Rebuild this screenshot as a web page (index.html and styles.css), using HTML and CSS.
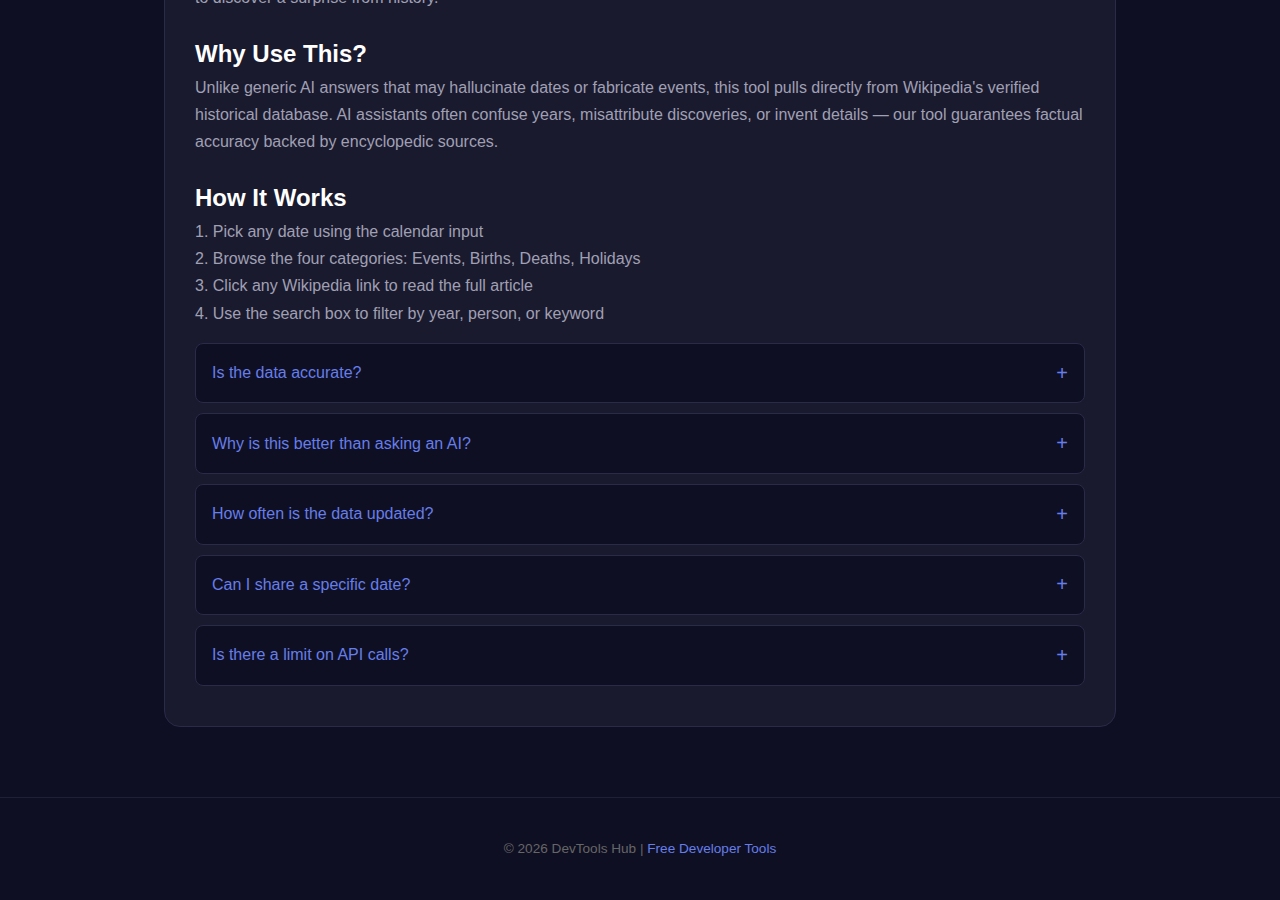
FILE: index.html
```html
<!DOCTYPE html>
<html lang="en">

<head>
    <meta charset="UTF-8">
    <meta name="viewport" content="width=device-width, initial-scale=1.0">
    <title>On This Day in History</title>
    <!-- Stylesheet -->
    <link rel="stylesheet" href="styles.css">
</head>

<body>
    <main class="page">
        <section class="card">
            <p class="text">Pick any day of the year and see which events, births and deaths happened on it, or pick a random one<br>to discover a surprise from history.</p>

            <h2 class="title">Why Use This?</h2>
            <p class="text">Unlike generic AI answers that may hallucinate dates or fabricate events, this tool pulls directly from Wikipedia's verified historical database. AI assistants often confuse years, misattribute discoveries, or invent details — our tool guarantees factual accuracy backed by encyclopedic sources.</p>

            <h2 class="title">How It Works</h2>
            <div class="steps">
                <div class="step">1. Pick any date using the calendar input</div>
                <div class="step">2. Browse the four categories: Events, Births, Deaths, Holidays</div>
                <div class="step">3. Click any Wikipedia link to read the full article</div>
                <div class="step">4. Use the search box to filter by year, person, or keyword</div>
            </div>

            <div class="faq">
                <div class="faq-item">
                    <span class="question">Is the data accurate?</span>
                    <span class="plus">+</span>
                </div>
                <div class="faq-item">
                    <span class="question">Why is this better than asking an AI?</span>
                    <span class="plus">+</span>
                </div>
                <div class="faq-item">
                    <span class="question">How often is the data updated?</span>
                    <span class="plus">+</span>
                </div>
                <div class="faq-item">
                    <span class="question">Can I share a specific date?</span>
                    <span class="plus">+</span>
                </div>
                <div class="faq-item">
                    <span class="question">Is there a limit on API calls?</span>
                    <span class="plus">+</span>
                </div>
            </div>
        </section>
    </main>

    <footer class="footer">
        <p>&copy; 2026 DevTools Hub | <a href="#">Free Developer Tools</a></p>
    </footer>
</body>

</html>
```

FILE: styles.css
```css
* {
    padding: 0;
    margin: 0;
    box-sizing: border-box;
    font-family: "Liberation Sans", Arial, sans-serif;
}

body {
    background-color: #0f0f23;
    color: #a0a0b4;
}

.page {
    width: 952px;
    margin: -74.5px auto 0;
    padding-bottom: 70px;
}

.card {
    background-color: #1a1a2e;
    border: 1px solid #2a2a4a;
    border-radius: 16px;
    padding: 30px;
}

.text {
    font-size: 16px;
    line-height: 1.7;
    color: #a0a0b4;
}

.title {
    font-size: 24px;
    line-height: 1.2;
    font-weight: bold;
    color: #ffffff;
    margin: 29px 0 5px;
}

.step {
    font-size: 16px;
    line-height: 1.7;
    color: #a0a0b4;
}

.faq {
    margin-top: 16px;
}

.faq-item {
    display: flex;
    justify-content: space-between;
    align-items: center;
    background-color: #0f0f23;
    border: 1px solid #2a2a4a;
    border-radius: 8px;
    padding: 20px 16px;
    margin-bottom: 10px;
    height: 60.6px;
}

.question {
    font-size: 16px;
    color: #667eea;
}

.plus {
    font-size: 20px;
    color: #667eea;
}

.footer {
    border-top: 1px solid #1f1f38;
    padding: 43px 0 40px;
    text-align: center;
}

.footer p {
    font-size: 13.6px;
    color: #666666;
}

.footer a {
    color: #667eea;
    text-decoration: none;
}
```
